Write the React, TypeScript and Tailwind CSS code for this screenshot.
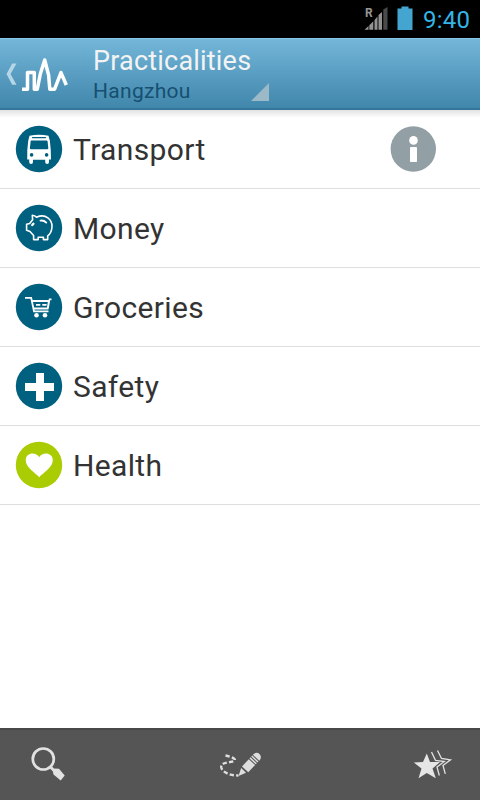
import type { ReactNode } from "react";

const ROBOTO = "font-['Roboto','Noto_Sans',sans-serif]";

function Disc({ color, children }: { color: string; children: ReactNode }) {
  return (
    <svg width="48" height="48" viewBox="0 0 48 48" className="shrink-0">
      <circle cx="24" cy="24" r="23.2" fill={color} />
      {children}
    </svg>
  );
}

const TEAL = "#006080";

function BusIcon() {
  return (
    <Disc color={TEAL}>
      <path d="M14.500 10.800Q24 8.600 33.500 10.800L34.900 16Q36 24 36 34.500H34V37Q34 39 32.100 39T30.200 37V34.800H18V37Q18 39 16.100 39T14.200 37V34.500H12.200Q12 24 13.200 16Z" fill="#fff" />
      <path d="M17.500 12.600H30.500" stroke={TEAL} strokeWidth="1.200" strokeLinecap="round" />
      <path d="M16.500 15.600H31.700Q32.400 15.600 32.600 16.400L33.300 23Q33.400 24.300 32.200 24.300H16Q14.800 24.300 14.900 23L15.600 16.400Q15.700 15.600 16.500 15.600Z" fill={TEAL} />
      <circle cx="16.600" cy="29.900" r="1.800" fill={TEAL} />
      <circle cx="31.600" cy="29.900" r="1.800" fill={TEAL} />
    </Disc>
  );
}

function PiggyIcon() {
  return (
    <Disc color={TEAL}>
      <g fill="none" stroke="#fff" strokeWidth="1.600" strokeLinejoin="round" strokeLinecap="round">
        <path d="M21.500 13.200C31 9 37.200 16 37 22.500C36.800 27.500 35.300 30 32.700 31.800V35.600H28.400V33.300H23.200V35.600H18.600V31.500L15 27.500L11.600 26.300V20.200L14.700 19.500L17.600 15.700L17.300 11.200Q20 11.300 21.500 13.200Z" />
        <path d="M25.500 16.600Q28.800 16.100 31.300 18.600" strokeWidth="1.800" />
        <path d="M17.300 21L18.400 19.800" strokeWidth="2.400" />
      </g>
    </Disc>
  );
}

function CartIcon() {
  return (
    <Disc color={TEAL}>
      <g fill="none" stroke="#fff" strokeWidth="1.800">
        <path d="M10 14.900H16.200L19 28.300H33.500" />
        <path d="M17.200 18H34L32.800 25.400H18.800" strokeLinejoin="round" strokeWidth="2" />
        <path d="M33.800 19L34.600 16.400H36.500" strokeWidth="1.600" />
        <path d="M21 21.900h4.300M27.300 21.900h4.300" />
      </g>
      <circle cx="21.500" cy="32.200" r="2.300" fill="#fff" />
      <circle cx="30" cy="32.200" r="2.300" fill="#fff" />
    </Disc>
  );
}

function CrossIcon() {
  return (
    <Disc color={TEAL}>
      <path d="M21 11h8v10h10v8H29v10h-8V29H10v-8h11z" fill="#fff" />
    </Disc>
  );
}

function HeartIcon() {
  return (
    <Disc color="#aacc03">
      <path d="M24.200 36.200C21 32.300 10.700 26.500 10.700 19.300C10.700 11.500 20.800 10.500 24.200 16.200C27.500 10.500 37.800 11.500 37.800 19.300C37.800 26.500 27.500 32.300 24.200 36.200Z" fill="#fff" />
    </Disc>
  );
}

function StatusBar() {
  return (
    <div className="flex h-[38px] items-start justify-end bg-black">
      <svg width="66" height="38" viewBox="0 0 66 38" className="shrink-0">
        <text x="15" y="17" fontFamily="Roboto, sans-serif" fontSize="12" fontWeight="700" fill="#969696">R</text>
        <path d="M14.500 29.800L18.500 26V29.800ZM19.300 25.300L23.300 21.300V29.800H19.300ZM24.500 20L27.500 16.500V29.800H24.500ZM28.500 15L32 12V29.800H28.500Z" fill="#929292" />
        <path d="M33.300 9.500L37.500 7V29.800H33.300Z" fill="#4a4a4a" />
        <path d="M47.500 8.500H51.500V6.500H58.500V8.500H62.500V30H47.500z" fill="#43a5d0" />
      </svg>
      <span className="w-[64px] pl-[7px] pt-[4px] text-[24px] leading-[32px] tracking-[0.200px] text-[#33b5e5]">9:40</span>
    </div>
  );
}

function ActionBar() {
  return (
    <header className="flex h-[72px] items-start border-b-2 border-[#34769b] border-t border-t-[#89c6e5] bg-linear-to-b from-[#73b6da] to-[#4087ab]">
      <svg width="93" height="69" viewBox="0 39 93 69" className="shrink-0">
        <path d="M12.200 63.500H16.500L10.500 74L16.500 84.700H12.200L6.500 74Z" fill="#b5d6e6" />
        <path d="M22 89.200H27.500V72.500H34.300V89.200H37.300L40.300 74L44.700 60L48.600 75L49.800 89.200H54.600L61 72.600L66.300 85" fill="none" stroke="#fff" strokeWidth="3.500" strokeLinejoin="round" />
      </svg>
      <div className="relative flex h-[69px] w-[178px] flex-col">
        <span className="mt-[6px] text-[27px] leading-[32px] tracking-[0.200px] text-[#f3f3f3]">Practicalities</span>
        <span className="text-[21px] leading-[28px] tracking-[0.300px] text-[#164f70]">Hangzhou</span>
        <svg width="18" height="18" viewBox="0 0 18 18" className="absolute left-[158px] top-[44px]">
          <path d="M18 0V18H0Z" fill="#9bb9c7" />
        </svg>
      </div>
    </header>
  );
}

function Row({ icon, label, trailing }: { icon: ReactNode; label: string; trailing?: ReactNode }) {
  return (
    <li className="flex h-[79px] items-center border-b border-[#dedede] pl-[15px] pr-[43px]">
      {icon}
      <span className="ml-[10px] flex-1 pt-[2px] text-[30px] leading-[36px] tracking-[0.350px] text-[#333]">{label}</span>
      {trailing}
    </li>
  );
}

function InfoIcon() {
  return (
    <svg width="48" height="48" viewBox="0 0 48 48">
      <circle cx="24.300" cy="24" r="22.700" fill="#929fa5" />
      <circle cx="24.500" cy="15.400" r="4.300" fill="#fff" />
      <rect x="21" y="22" width="7" height="15" rx="0.800" fill="#fff" />
    </svg>
  );
}

function BottomBar() {
  return (
    <footer className="flex h-[72px] justify-between border-t-2 border-[#484848] bg-[#555]">
      <svg width="80" height="70" viewBox="0 730 80 70">
        <circle cx="43.300" cy="759" r="10.500" fill="none" stroke="#e2e2e2" strokeWidth="2.700" />
        <path d="M50.500 767L54 770.500" stroke="#e2e2e2" strokeWidth="2.800" />
        <path d="M54.500 768.500L59 768.700L64.700 775.500L60.700 780.500L53.500 774.500L52.800 771Z" fill="#e2e2e2" />
      </svg>
      <svg width="80" height="70" viewBox="200 730 80 70">
        <path d="M225.500 755.500C231 756.500 238 759.500 233.500 761.300C228 762.800 220.500 762.500 221.300 767.500C222.500 772.500 230 775.500 238.500 775.500" fill="none" stroke="#dedede" strokeWidth="2.400" strokeDasharray="4.300 2.200" />
        <path d="M238.500 776L241.200 768L246 772.800Z" fill="#dedede" />
        <g transform="translate(239 776) rotate(-47)" fill="#dedede">
          <path d="M9 -4.300H19V4.300H9Z" />
          <path d="M20 -4.300h1.500v8.600h-1.500zM22.500 -4.300h1.500v8.600h-1.500z" />
          <path d="M25 -4.300H26Q30 -3.500 30 0T26 4.300H25Z" />
        </g>
      </svg>
      <svg width="80" height="70" viewBox="400 730 80 70">
        <path d="M426.800 753.500L430 762H440L432.500 768.500L435.800 778.300L426.800 773L418.500 778.300L421.500 768.500L413.800 762.500L423 762Z" fill="#e6e6e6" />
        <g fill="none" stroke="#e2e2e2" strokeWidth="1.300">
          <path d="M431.500 752L435.500 760.300L444.300 761.500L437 767L439.300 775.500" />
          <path d="M437.500 750.500L441.500 758.500L450.500 759.800L443 765.500L445.300 773.800" />
        </g>
      </svg>
    </footer>
  );
}

export default function App() {
  return (
    <div className={`flex h-[800px] w-[480px] flex-col overflow-hidden bg-white ${ROBOTO}`}>
      <StatusBar />
      <ActionBar />
      <main className="flex-1 bg-linear-to-b from-[#e2e2e2] to-white to-[8px]">
        <ul>
          <Row icon={<BusIcon />} label="Transport" trailing={<InfoIcon />} />
          <Row icon={<PiggyIcon />} label="Money" />
          <Row icon={<CartIcon />} label="Groceries" />
          <Row icon={<CrossIcon />} label="Safety" />
          <Row icon={<HeartIcon />} label="Health" />
        </ul>
      </main>
      <BottomBar />
    </div>
  );
}
